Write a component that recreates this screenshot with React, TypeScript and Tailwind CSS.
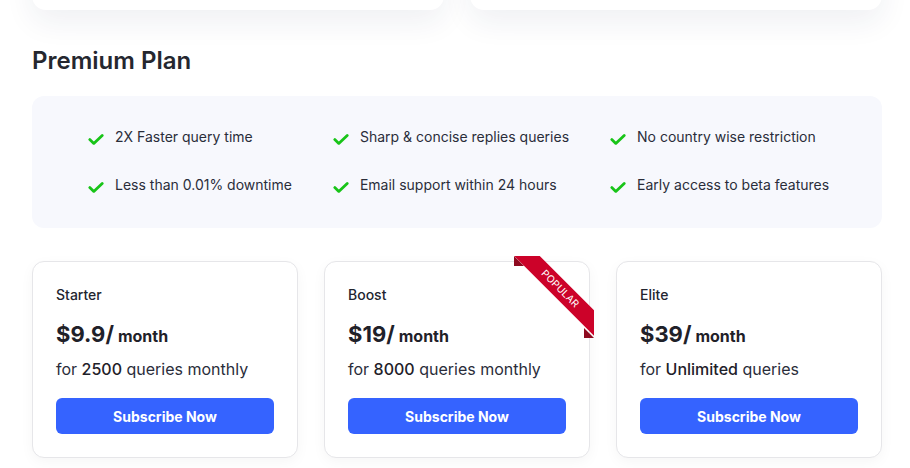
import React from "react";

const features = [
  ["2X Faster query time", "Less than 0.01% downtime"],
  ["Sharp & concise replies queries", "Email support within 24 hours"],
  ["No country wise restriction", "Early access to beta features"],
];

const plans = [
  { name: "Starter", price: "$9.9/", pre: "for ", strong: "2500", post: " queries monthly", popular: false },
  { name: "Boost", price: "$19/", pre: "for ", strong: "8000", post: " queries monthly", popular: true },
  { name: "Elite", price: "$39/", pre: "for ", strong: "Unlimited", post: " queries", popular: false },
];

function Check() {
  return (
    <svg width="16" height="16" viewBox="0 0 16 16" className="mt-[4px] shrink-0">
      <path d="M1.8 8.6 L5.8 12.4 L14.2 4.4" fill="none" stroke="#18c418" strokeWidth="2.8" strokeLinecap="round" strokeLinejoin="round" />
    </svg>
  );
}

function Ribbon() {
  return (
    <div className="absolute -top-[6px] -right-[5px] w-[80px] h-[82px] overflow-hidden">
      <div className="absolute top-0 left-0 w-0 h-0 border-[5px] border-[#8e0a1f] border-t-transparent border-r-transparent" />
      <div className="absolute bottom-0 right-0 w-0 h-0 border-[5px] border-[#8e0a1f] border-t-transparent border-r-transparent" />
      <span className="absolute left-[-14px] top-[24px] w-[120px] h-[18px] rotate-45 bg-[#cc0229] text-white text-[10px] leading-[17px] text-center uppercase tracking-[0.2px]">
        Popular
      </span>
    </div>
  );
}

export default function App() {
  return (
    <div
      className="w-[910px] h-[468px] overflow-hidden bg-white pl-8 pr-[28px] text-[#1f2233]"
      style={{ fontFamily: "Inter, 'Noto Sans', sans-serif" }}
    >
      {/* bottom of the cards above */}
      <div className="flex gap-[26px] -mt-[50px]">
        <div className="w-[412px] h-[60px] bg-white rounded-[14px] shadow-[0_12px_30px_rgba(30,40,80,0.07)]" />
        <div className="w-[412px] h-[60px] bg-white rounded-[14px] shadow-[0_12px_30px_rgba(30,40,80,0.07)]" />
      </div>

      <h2 className="mt-[35px] text-[24px] leading-[32px] font-semibold text-[#25272f]">Premium Plan</h2>

      <div className="mt-[19px] h-[132px] rounded-[12px] bg-[#f7f8fd] flex pl-[56px] gap-[41px] py-[31px]">
        {features.map((col, i) => (
          <div key={i} className="flex flex-col gap-[28px]">
            {col.map((f) => (
              <div key={f} className="flex items-start gap-[11px]">
                <Check />
                <span className="text-[14px] leading-[20px] text-[#2a2d3a]">{f}</span>
              </div>
            ))}
          </div>
        ))}
      </div>

      <div className="mt-[33px] flex gap-[26px]">
        {plans.map((p) => (
          <div
            key={p.name}
            className="relative w-[266px] h-[197px] bg-white border border-[#e6e6e9] rounded-[12px] px-[23px] pt-[23px] shadow-[0_4px_14px_rgba(0,0,0,0.04)]"
          >
            {p.popular && <Ribbon />}
            <div className="text-[14px] leading-[20px] font-medium text-[#23252f]">{p.name}</div>
            <div className="mt-[15px] leading-[28px] font-bold text-[#1f2129]">
              <span className="text-[22px]">{p.price}</span>
              <span className="text-[16px] ml-[4px]">month</span>
            </div>
            <div className="mt-[7px] text-[16px] leading-[24px] text-[#2a2d3a]">
              {p.pre}
              <span className="font-medium text-[#1f2129]">{p.strong}</span>
              {p.post}
            </div>
            <button className="mt-[17px] w-full h-[36px] rounded-[6px] bg-[#3563ff] text-white text-[14px] font-bold">
              Subscribe Now
            </button>
          </div>
        ))}
      </div>
    </div>
  );
}
